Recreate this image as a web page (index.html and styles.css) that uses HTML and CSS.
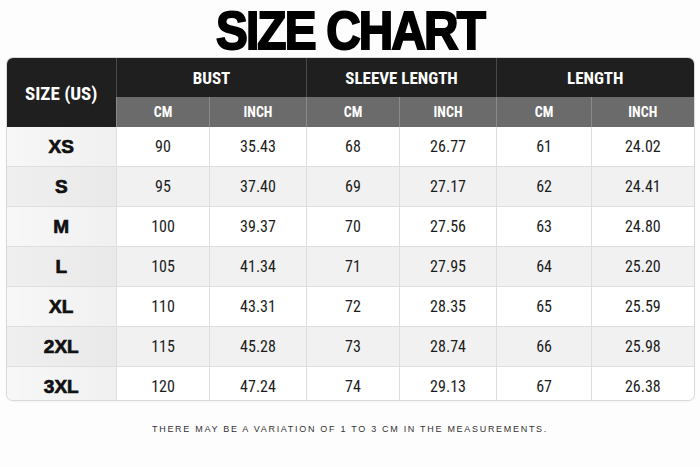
FILE: index.html
```html
<!DOCTYPE html>
<html>
<head>
<meta charset="utf-8">
<link rel="stylesheet" href="styles.css">
</head>
<body>
<div class="page">
  <h1 class="title">SIZE CHART</h1>
  <div class="chart">
    <table class="grid">
      <colgroup>
        <col class="c-size"><col class="c-a"><col class="c-b"><col class="c-a"><col class="c-b"><col class="c-c"><col class="c-d">
      </colgroup>
      <thead>
        <tr class="h1">
          <th rowspan="2" class="h-size">SIZE (US)</th>
          <th colspan="2">BUST</th>
          <th colspan="2">SLEEVE LENGTH</th>
          <th colspan="2">LENGTH</th>
        </tr>
        <tr class="h2">
          <th>CM</th><th>INCH</th><th>CM</th><th>INCH</th><th>CM</th><th>INCH</th>
        </tr>
      </thead>
      <tbody>
        <tr><td class="sz">XS</td><td>90</td><td>35.43</td><td>68</td><td>26.77</td><td>61</td><td>24.02</td></tr>
        <tr class="alt"><td class="sz">S</td><td>95</td><td>37.40</td><td>69</td><td>27.17</td><td>62</td><td>24.41</td></tr>
        <tr><td class="sz">M</td><td>100</td><td>39.37</td><td>70</td><td>27.56</td><td>63</td><td>24.80</td></tr>
        <tr class="alt"><td class="sz">L</td><td>105</td><td>41.34</td><td>71</td><td>27.95</td><td>64</td><td>25.20</td></tr>
        <tr><td class="sz">XL</td><td>110</td><td>43.31</td><td>72</td><td>28.35</td><td>65</td><td>25.59</td></tr>
        <tr class="alt"><td class="sz">2XL</td><td>115</td><td>45.28</td><td>73</td><td>28.74</td><td>66</td><td>25.98</td></tr>
        <tr><td class="sz">3XL</td><td>120</td><td>47.24</td><td>74</td><td>29.13</td><td>67</td><td>26.38</td></tr>
      </tbody>
    </table>
  </div>
  <p class="note">THERE MAY BE A VARIATION OF 1 TO 3 CM IN THE MEASUREMENTS.</p>
</div>
</body>
</html>
```
FILE: styles.css
```css
html, body {
  margin: 0;
  padding: 0;
  background: #fdfdfd;
}
.page {
  width: 700px;
  height: 467px;
  display: flex;
  flex-direction: column;
  align-items: center;
}
.title {
  margin: 0;
  height: 58px;
  line-height: 61px;
  font-family: "Liberation Sans", Arial, sans-serif;
  font-weight: 700;
  font-size: 53px;
  letter-spacing: -2px;
  color: #000;
  transform: scaleX(0.9);
  -webkit-text-stroke: 2px #000;
}
.chart {
  width: 687px;
  height: 342px;
  border-radius: 6px;
  overflow: hidden;
  box-shadow: 0 0 0 1px #d9d9d9, 0 1px 3px rgba(0,0,0,0.08);
}
.grid {
  width: 687px;
  height: 342px;
  border-collapse: collapse;
  table-layout: fixed;
  font-family: "Roboto Condensed", "Liberation Sans Narrow", "Liberation Sans", sans-serif;
}
.c-size { width: 110px; }
.c-a { width: 93px; }
.c-b { width: 97px; }
.c-c { width: 95px; }
.c-d { width: 102px; }
.grid th, .grid td {
  padding: 0;
  text-align: center;
  vertical-align: middle;
}
.h1 th {
  height: 39px;
  background: #1f1f1f;
  color: #fff;
  font-size: 17px;
  font-weight: 700;
  border-left: 1px solid #4a4a4a;
}
.h1 th.h-size {
  border-left: none;
  font-size: 19px;
  padding-top: 2px;
}
.h2 th {
  height: 30px;
  background: #6b6b6b;
  color: #fff;
  font-size: 14px;
  font-weight: 700;
  border-left: 1px solid #8a8a8a;
}
.grid td {
  height: 39px;
  font-size: 16px;
  color: #1c1c1c;
  background: #fff;
  border-top: 1px solid #dedede;
  border-left: 1px solid #dedede;
}
.grid tr.alt td {
  background: #f1f1f1;
}
.grid td.sz {
  border-left: none;
  background: linear-gradient(90deg, #f7f7f7, #f0f0f0);
  font-family: "Liberation Sans", Arial, sans-serif;
  font-weight: 700;
  font-size: 19px;
  color: #111;
  -webkit-text-stroke: 0.7px #111;
}
.grid tr.alt td.sz {
  background: linear-gradient(90deg, #efefef, #e9e9e9);
}
tbody tr:first-child td {
  border-top: none;
}
.note {
  margin: 24px 0 0 0;
  font-family: "Liberation Sans", Arial, sans-serif;
  font-size: 9px;
  letter-spacing: 1.7px;
  color: #333;
}
```
